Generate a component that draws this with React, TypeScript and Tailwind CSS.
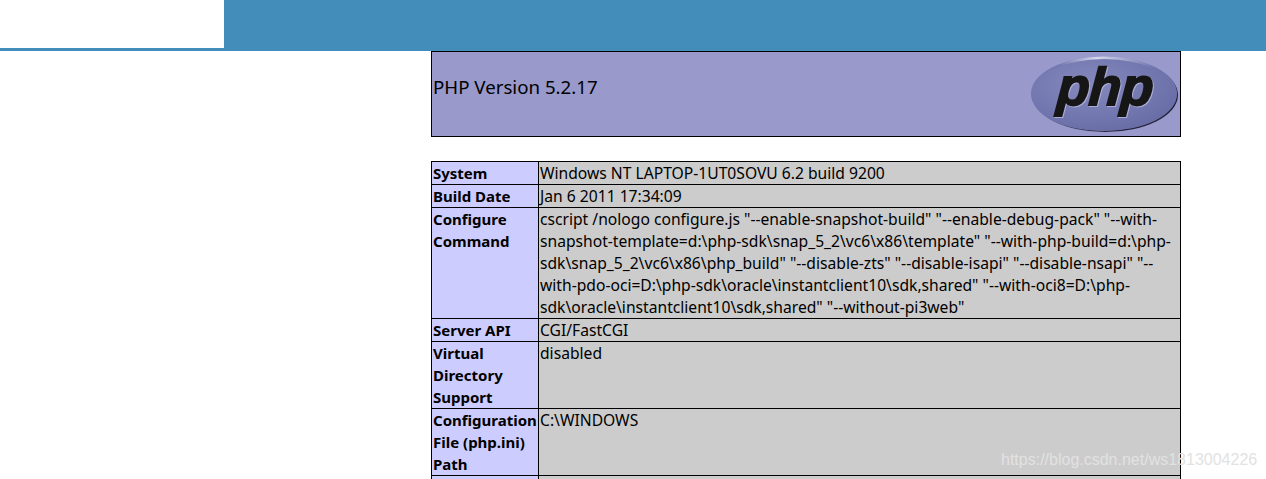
import React from 'react';

const rows: { label: React.ReactNode; value: React.ReactNode }[] = [
  { label: 'System', value: 'Windows NT LAPTOP-1UT0SOVU 6.2 build 9200' },
  { label: 'Build Date', value: 'Jan 6 2011 17:34:09' },
  {
    label: <>Configure<br />Command</>,
    value: (
      <>
        cscript /nologo configure.js "--enable-snapshot-build" "--enable-debug-pack" "--with-<br />
        snapshot-template=d:\php-sdk\snap_5_2\vc6\x86\template" "--with-php-build=d:\php-<br />
        sdk\snap_5_2\vc6\x86\php_build" "--disable-zts" "--disable-isapi" "--disable-nsapi" "--<br />
        with-pdo-oci=D:\php-sdk\oracle\instantclient10\sdk,shared" "--with-oci8=D:\php-<br />
        sdk\oracle\instantclient10\sdk,shared" "--without-pi3web"
      </>
    ),
  },
  { label: 'Server API', value: 'CGI/FastCGI' },
  { label: <>Virtual<br />Directory<br />Support</>, value: 'disabled' },
  { label: <>Configuration<br />File (php.ini)<br />Path</>, value: 'C:\\WINDOWS' },
];

function PhpLogo() {
  const word = (fill: string, stroke: number, dx: number, dy: number) => (
    <g transform={`translate(${74 + dx} ${51 + dy}) skewX(-4)`}>
      <text
        x="0"
        y="0"
        textAnchor="middle"
        fontFamily="'Liberation Sans', sans-serif"
        fontWeight="700"
        fontStyle="italic"
        fontSize="53"
        letterSpacing="-0.5"
        fill={fill}
        stroke={fill}
        strokeWidth={stroke}
      >
        php
      </text>
    </g>
  );

  return (
    <svg width="150" height="80" viewBox="0 0 150 80" className="block">
      <defs>
        <radialGradient id="phpOval" cx="0.4" cy="0.35" r="0.75">
          <stop offset="0" stopColor="#8589bd" />
          <stop offset="0.7" stopColor="#6f74ad" />
          <stop offset="1" stopColor="#6469a3" />
        </radialGradient>
        <linearGradient id="phpRimDark" x1="0" x2="1" y1="0" y2="0.3">
          <stop offset="0.25" stopColor="#6f74ad" />
          <stop offset="0.75" stopColor="#23233a" />
        </linearGradient>
        <linearGradient id="phpRimLight" x1="0" x2="1" y1="0" y2="0">
          <stop offset="0.2" stopColor="#7479b0" />
          <stop offset="0.45" stopColor="#d6d8ec" />
          <stop offset="0.85" stopColor="#6f74ad" />
        </linearGradient>
      </defs>
      <ellipse cx="75" cy="41" rx="73" ry="37" fill="url(#phpRimDark)" />
      <ellipse cx="74" cy="39.5" rx="73" ry="37" fill="url(#phpRimLight)" />
      <ellipse cx="74" cy="41" rx="72.5" ry="36" fill="url(#phpOval)" />
      {word('#a9acd6', 1.8, 1, 1)}
      {word('#161616', 1.8, 0, 0)}
    </svg>
  );
}

export default function App() {
  return (
    <div className="relative h-[479px] overflow-hidden bg-white text-black font-['Noto_Sans',sans-serif]">
      {/* top bar */}
      <div className="h-[51px] bg-[#428dba]">
        <div className="h-[48px] w-[224px] bg-white" />
      </div>

      <div className="ml-[431px] w-[750px]">
        <div className="flex h-[86px] justify-between border border-black bg-[#9999cc] pl-px">
          <h1 className="mt-[21px] text-[18.7px] leading-[27px] font-normal">PHP Version 5.2.17</h1>
          <div className="mt-[2px]">
            <PhpLogo />
          </div>
        </div>

        <table className="mt-[24px] w-full table-fixed border-collapse text-[15.65px] leading-[22px]">
          <colgroup>
            <col className="w-[107px]" />
            <col />
          </colgroup>
          <tbody>
            {rows.map((row, i) => (
              <tr key={i}>
                <td className="border border-black bg-[#ccccff] pl-px align-top text-[15px] font-bold whitespace-nowrap">{row.label}</td>
                <td className="border border-black bg-[#cccccc] pl-px align-top whitespace-nowrap">{row.value}</td>
              </tr>
            ))}
            {/* next row only just starts at the window's bottom edge */}
            <tr>
              <td className="h-[22px] border border-black bg-[#ccccff]" />
              <td className="h-[22px] border border-black bg-[#cccccc]" />
            </tr>
          </tbody>
        </table>
      </div>

      <div className="absolute top-[449px] left-[1001px] font-['Liberation_Sans',sans-serif] text-[16px] leading-[22px] whitespace-nowrap text-[#e2e2e2]">
        https://blog.csdn.net/ws1813004226
      </div>
    </div>
  );
}
